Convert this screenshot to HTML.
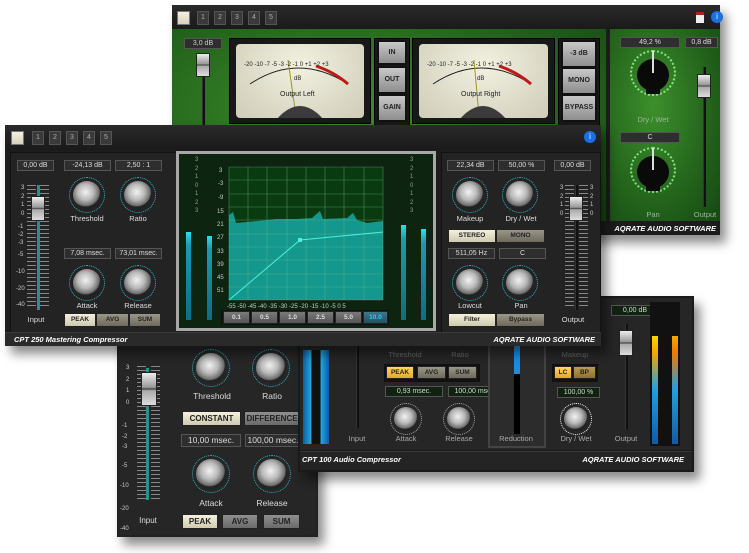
<!DOCTYPE html>
<html><head><meta charset="utf-8">
<style>
*{box-sizing:border-box;margin:0;padding:0}
body{width:749px;height:553px;background:#fff;position:relative;overflow:hidden;font-family:"Liberation Sans",sans-serif;}
.a{position:absolute}
.win{position:absolute;background:#202020;box-shadow:6px 8px 10px rgba(0,0,0,.45)}
.tb{position:absolute;left:0;right:0;top:0;height:24px;background:linear-gradient(#2a2a2a,#1a1a1a)}
.sq{position:absolute;width:13px;height:14px;background:linear-gradient(#f4f1e2,#d7d2bd);border:1px solid #777}
.nb{position:absolute;width:12px;height:14px;background:#3a3a3a;border:1px solid #555;color:#aaa;font-size:7px;text-align:center;line-height:12px}
.box{position:absolute;background:#2e2e2e;border:1px solid #555;color:#ddd;font-size:7px;text-align:center;line-height:9px;height:11px}
.lbl{position:absolute;color:#ddd;font-size:7.5px;text-align:center;width:60px;margin-left:-30px}
.btn{position:absolute;background:linear-gradient(#9a9788,#6d6a5e);border:1px solid #222;color:#222;font-size:6.5px;font-weight:bold;text-align:center;line-height:12px;height:14px}
.on{background:linear-gradient(#f4f0dc,#cfc9b0)}
.yl{background:linear-gradient(#ffd85a,#e2a92a)}
.knob{position:absolute;border-radius:50%;background:radial-gradient(circle at 45% 40%,#f2f2f2 0,#b9b9b9 35%,#6b6b6b 60%,#262626 64%,#111 100%)}
.ring{position:absolute;border-radius:50%;border:1px dotted #2fb9c8}
.ft{position:absolute;color:#fff;font-size:7.5px;font-weight:bold;font-style:italic}
.track{position:absolute;width:3px;background:#111;border-left:1px solid #333}
.thumb{position:absolute;width:14px;background:linear-gradient(#eee,#999 45%,#444 50%,#aaa 55%,#ddd);border:1px solid #222;border-radius:1px}
.sc{position:absolute;font-size:6px;color:#ccc}
.green{background:radial-gradient(ellipse at 40% 40%,#3d8f2c,#1f5c19 70%,#174712)}
.vu{position:absolute;background:#181818;border:1px solid #000}
.vuf{position:absolute;left:6px;top:5px;right:6px;bottom:5px;background:radial-gradient(ellipse at 50% 30%,#f2f0df,#cfcdb9);border-radius:4px;overflow:hidden}
.gbtn{position:absolute;background:linear-gradient(#c8c8c8,#8e8e8e);border:2px solid #111;font-size:7px;font-weight:bold;color:#222;text-align:center}
.ticks{position:absolute;width:9px;background:repeating-linear-gradient(#888 0 1px,transparent 1px 4px)}
</style></head><body>

<!-- GREEN BACK WINDOW -->
<div class="win" style="left:172px;top:5px;width:548px;height:230px;background:#1c1c1c">
 <div class="tb"></div>
 <div class="sq" style="left:5px;top:6px"></div>
 <div class="nb" style="left:25px;top:6px">1</div><div class="nb" style="left:42px;top:6px">2</div><div class="nb" style="left:59px;top:6px">3</div><div class="nb" style="left:76px;top:6px">4</div><div class="nb" style="left:93px;top:6px">5</div>
 <div class="a" style="left:524px;top:7px;width:8px;height:11px;background:#eee;border-top:3px solid #b02020"></div>
 <div class="a" style="left:539px;top:6px;width:12px;height:12px;border-radius:50%;background:#1b6fe0;color:#fff;font-size:8px;text-align:center;line-height:12px">i</div>
 <div class="a green" style="left:0;top:24px;width:434px;height:192px"></div>
 <div class="a green" style="left:438px;top:24px;width:110px;height:192px"></div>
 <div class="box" style="left:12px;top:33px;width:38px;color:#ccc">3,0 dB</div>
 <div class="track" style="left:30px;top:48px;height:160px"></div>
 <div class="thumb" style="left:24px;top:48px;height:24px"></div>
 <div class="vu" style="left:57px;top:33px;width:142px;height:86px"><div class="vuf">
  <svg width="128" height="74" style="position:absolute;left:0;top:0">
   <path d="M14 40 Q62 8 112 40" fill="none" stroke="#222" stroke-width="1"/>
   <path d="M80 22 Q98 28 112 40" fill="none" stroke="#c01818" stroke-width="3"/>
   <line x1="60" y1="72" x2="52" y2="16" stroke="#9a9a20" stroke-width="1"/>
   <path d="M40 76 Q64 48 88 76Z" fill="#3b3b3b"/>
   <text x="8" y="22" font-size="6" fill="#222" font-family="Liberation Sans">-20 -10 -7 -5 -3 -2 -1 0 +1 +2 +3</text>
   <text x="58" y="36" font-size="6" fill="#222" font-family="Liberation Sans">dB</text>
   <text x="44" y="52" font-size="7" fill="#222" font-family="Liberation Sans">Output Left</text>
  </svg></div></div>
 <div class="vu" style="left:202px;top:33px;width:36px;height:88px"></div>
 <div class="gbtn" style="left:205px;top:35px;width:30px;height:25px;line-height:21px">IN</div>
 <div class="gbtn yl" style="left:205px;top:61px;width:30px;height:28px;line-height:24px">OUT</div>
 <div class="gbtn" style="left:205px;top:89px;width:30px;height:28px;line-height:24px">GAIN</div>
 <div class="vu" style="left:240px;top:33px;width:143px;height:86px"><div class="vuf">
  <svg width="130" height="74" style="position:absolute;left:0;top:0">
   <path d="M14 40 Q62 8 112 40" fill="none" stroke="#222" stroke-width="1"/>
   <path d="M80 22 Q98 28 112 40" fill="none" stroke="#c01818" stroke-width="3"/>
   <line x1="60" y1="72" x2="55" y2="16" stroke="#9a9a20" stroke-width="1"/>
   <path d="M40 76 Q64 48 88 76Z" fill="#3b3b3b"/>
   <text x="8" y="22" font-size="6" fill="#222" font-family="Liberation Sans">-20 -10 -7 -5 -3 -2 -1 0 +1 +2 +3</text>
   <text x="58" y="36" font-size="6" fill="#222" font-family="Liberation Sans">dB</text>
   <text x="42" y="52" font-size="7" fill="#222" font-family="Liberation Sans">Output Right</text>
  </svg></div></div>
 <div class="vu" style="left:386px;top:33px;width:42px;height:88px"></div>
 <div class="gbtn" style="left:389px;top:35px;width:36px;height:28px;line-height:24px">-3 dB</div>
 <div class="gbtn" style="left:389px;top:62px;width:36px;height:28px;line-height:24px">MONO</div>
 <div class="gbtn" style="left:389px;top:89px;width:36px;height:28px;line-height:24px">BYPASS</div>
 <div class="box" style="left:448px;top:32px;width:60px">49,2 %</div>
 <div class="box" style="left:513px;top:32px;width:33px">0,8 dB</div>
 <div class="ring" style="left:458px;top:45px;width:46px;height:46px;border:2px dotted #9f9;opacity:.8"></div>
 <div class="a" style="left:465px;top:54px;width:32px;height:32px;border-radius:50%;background:#0a0a0a"></div>
 <div class="a" style="left:474px;top:80px;width:14px;height:9px;background:#0a0a0a"></div>
 <div class="a" style="left:480px;top:46px;width:2px;height:22px;background:#ddd"></div>
 <div class="lbl" style="left:481px;top:110px;color:#9ab69a">Dry / Wet</div>
 <div class="box" style="left:448px;top:127px;width:60px">C</div>
 <div class="ring" style="left:458px;top:142px;width:46px;height:46px;border:2px dotted #9f9;opacity:.8"></div>
 <div class="a" style="left:465px;top:151px;width:32px;height:32px;border-radius:50%;background:#0a0a0a"></div>
 <div class="a" style="left:474px;top:177px;width:14px;height:9px;background:#0a0a0a"></div>
 <div class="a" style="left:480px;top:143px;width:2px;height:22px;background:#ddd"></div>
 <div class="lbl" style="left:481px;top:205px;color:#9ab69a">Pan</div>
 <div class="track" style="left:531px;top:62px;height:140px"></div>
 <div class="thumb" style="left:525px;top:69px;height:24px"></div>
 <div class="lbl" style="left:533px;top:205px;color:#9ab69a">Output</div>
 <div class="ft" style="right:4px;top:219px">AQRATE AUDIO SOFTWARE</div>
</div>

<!-- BOTTOM LEFT WINDOW -->
<div class="win" style="left:117px;top:330px;width:201px;height:207px;background:#222">
 <div class="a" style="left:2px;top:2px;width:197px;height:203px;background:#262626"></div>
 <div class="a" style="left:29px;top:38px;width:3px;height:132px;background:#2a8f90"></div>
 <div class="ticks" style="left:20px;top:36px;height:136px"></div>
 <div class="ticks" style="left:34px;top:36px;height:136px"></div>
 <div class="thumb" style="left:24px;top:42px;width:16px;height:34px"></div>
 <div class="sc" style="left:9px;top:33px;line-height:11.5px">3<br>2<br>1<br>0</div>
 <div class="sc" style="left:5px;top:91px;line-height:10.5px">-1<br>-2<br>-3</div>
 <div class="sc" style="left:5px;top:133px">-5</div><div class="sc" style="left:3px;top:153px">-10</div><div class="sc" style="left:3px;top:176px">-20</div>
 <div class="sc" style="left:3px;top:196px">-40</div>
 <div class="lbl" style="left:31px;top:186px;font-size:8px">Input</div>
 <div class="ring" style="left:75px;top:19px;width:38px;height:38px"></div>
 <div class="knob" style="left:79px;top:23px;width:30px;height:30px"></div>
 <div class="ring" style="left:135px;top:19px;width:38px;height:38px"></div>
 <div class="knob" style="left:139px;top:23px;width:30px;height:30px"></div>
 <div class="lbl" style="left:95px;top:61px;font-size:8.5px">Threshold</div>
 <div class="lbl" style="left:155px;top:61px;font-size:8.5px">Ratio</div>
 <div class="btn on" style="left:65px;top:81px;width:59px;height:15px;font-size:8px;line-height:13px">CONSTANT</div>
 <div class="btn" style="left:127px;top:81px;width:56px;height:15px;font-size:8px;line-height:13px;background:linear-gradient(#8f8f8f,#6a6a6a)">DIFFERENCE</div>
 <div class="box" style="left:64px;top:104px;width:60px;height:13px;font-size:8.5px;line-height:11px">10,00 msec.</div>
 <div class="box" style="left:128px;top:104px;width:56px;height:13px;font-size:8.5px;line-height:11px">100,00 msec.</div>
 <div class="ring" style="left:75px;top:125px;width:38px;height:38px"></div>
 <div class="knob" style="left:79px;top:129px;width:30px;height:30px"></div>
 <div class="ring" style="left:136px;top:125px;width:38px;height:38px"></div>
 <div class="knob" style="left:140px;top:129px;width:30px;height:30px"></div>
 <div class="lbl" style="left:94px;top:168px;font-size:8.5px">Attack</div>
 <div class="lbl" style="left:155px;top:168px;font-size:8.5px">Release</div>
 <div class="btn on" style="left:65px;top:184px;width:36px;height:15px;font-size:8px;line-height:13px">PEAK</div>
 <div class="btn" style="left:105px;top:184px;width:36px;height:15px;font-size:8px;line-height:13px;background:linear-gradient(#8f8f8f,#6a6a6a)">AVG</div>
 <div class="btn" style="left:146px;top:184px;width:37px;height:15px;font-size:8px;line-height:13px;background:linear-gradient(#8f8f8f,#6a6a6a)">SUM</div>
</div>

<!-- CPT 100 WINDOW -->
<div class="win" style="left:298px;top:296px;width:396px;height:176px;background:#1a1a1a">
 <div class="a" style="left:2px;top:2px;width:392px;height:152px;background:#262626"></div>
 <div class="a" style="left:5px;top:54px;width:26px;height:94px;background:linear-gradient(90deg,#0e5ca8,#22a6d8 30%,#111 35%,#111 65%,#22a6d8 70%,#0e5ca8)"></div>
 <div class="track" style="left:58px;top:40px;height:92px"></div>
 <div class="lbl" style="left:59px;top:138px;color:#aaa">Input</div>
 <div class="lbl" style="left:107px;top:54px;color:#666">Threshold</div>
 <div class="lbl" style="left:162px;top:54px;color:#666">Ratio</div>
 <div class="a" style="left:86px;top:68px;width:96px;height:18px;background:#111"></div>
 <div class="btn yl" style="left:88px;top:70px;width:28px;height:13px;line-height:11px">PEAK</div>
 <div class="btn" style="left:119px;top:70px;width:29px;height:13px;line-height:11px">AVG</div>
 <div class="btn" style="left:150px;top:70px;width:29px;height:13px;line-height:11px">SUM</div>
 <div class="box" style="left:87px;top:90px;width:58px;background:#122212;color:#cdc">0,93 msec.</div>
 <div class="box" style="left:150px;top:90px;width:55px;background:#122212;color:#cdc">100,00 msec.</div>
 <div class="ring" style="left:92px;top:107px;width:32px;height:32px;border-color:#aaa"></div>
 <div class="knob" style="left:96px;top:111px;width:24px;height:24px"></div>
 <div class="ring" style="left:145px;top:107px;width:32px;height:32px;border-color:#aaa"></div>
 <div class="knob" style="left:149px;top:111px;width:24px;height:24px"></div>
 <div class="lbl" style="left:108px;top:138px;color:#aaa">Attack</div>
 <div class="lbl" style="left:161px;top:138px;color:#aaa">Release</div>
 <div class="a" style="left:190px;top:20px;width:58px;height:132px;background:#2c2c2c;border:2px solid #444"></div>
 <div class="a" style="left:216px;top:50px;width:6px;height:88px;background:#000"></div>
 <div class="a" style="left:216px;top:50px;width:6px;height:28px;background:#1c8ce0"></div>
 <div class="lbl" style="left:218px;top:138px;color:#aaa">Reduction</div>
 <div class="lbl" style="left:277px;top:54px;color:#666">Makeup</div>
 <div class="a" style="left:254px;top:68px;width:46px;height:18px;background:#111"></div>
 <div class="btn yl" style="left:256px;top:70px;width:18px;height:13px;line-height:11px">LC</div>
 <div class="btn" style="left:275px;top:70px;width:23px;height:13px;line-height:11px;background:linear-gradient(#b89c52,#8c7030)">BP</div>
 <div class="box" style="left:259px;top:91px;width:43px;background:#122212;color:#cdc">100,00 %</div>
 <div class="ring" style="left:262px;top:107px;width:32px;height:32px;border-color:#fff"></div>
 <div class="knob" style="left:266px;top:111px;width:24px;height:24px"></div>
 <div class="lbl" style="left:278px;top:138px;color:#aaa">Dry / Wet</div>
 <div class="box" style="left:313px;top:9px;width:48px;background:#122212;color:#cdc">0,00 dB</div>
 <div class="track" style="left:327px;top:28px;height:106px"></div>
 <div class="thumb" style="left:321px;top:34px;height:26px"></div>
 <div class="lbl" style="left:328px;top:138px;color:#aaa">Output</div>
 <div class="a" style="left:352px;top:6px;width:30px;height:144px;background:#111"></div>
 <div class="a" style="left:354px;top:40px;width:6px;height:108px;background:linear-gradient(#f5d800,#f5a800 15%,#20a0e0 50%,#0e5ca8)"></div>
 <div class="a" style="left:374px;top:40px;width:6px;height:108px;background:linear-gradient(#f5a800,#f57800 15%,#20a0e0 50%,#0e5ca8)"></div>
 <div class="a" style="left:2px;top:155px;width:392px;height:19px;background:#242424;border-top:1px solid #3a3a3a"></div>
 <div class="ft" style="left:4px;top:159px">CPT 100 Audio Compressor</div>
 <div class="ft" style="right:10px;top:159px">AQRATE AUDIO SOFTWARE</div>
</div>

<!-- MAIN CPT 250 WINDOW -->
<div class="win" style="left:5px;top:125px;width:596px;height:221px;background:#1d1d1d">
 <div class="tb" style="height:25px"></div>
 <div class="sq" style="left:6px;top:6px"></div>
 <div class="nb" style="left:27px;top:6px">1</div><div class="nb" style="left:44px;top:6px">2</div><div class="nb" style="left:61px;top:6px">3</div><div class="nb" style="left:78px;top:6px">4</div><div class="nb" style="left:95px;top:6px">5</div>
 <div class="a" style="left:579px;top:6px;width:12px;height:12px;border-radius:50%;background:#1b6fe0;color:#fff;font-size:8px;text-align:center;line-height:12px">i</div>
 <div class="a" style="left:5px;top:27px;width:168px;height:182px;background:#232323;border:1px solid #111"></div>
 <div class="box" style="left:12px;top:35px;width:37px">0,00 dB</div>
 <div class="box" style="left:59px;top:35px;width:47px">-24,13 dB</div>
 <div class="box" style="left:110px;top:35px;width:47px">2,50 : 1</div>
 <div class="ticks" style="left:22px;top:60px;height:122px"></div><div class="ticks" style="left:35px;top:60px;height:122px"></div>
 <div class="a" style="left:32px;top:60px;width:3px;height:125px;background:#2a8f90"></div>
 <div class="thumb" style="left:26px;top:71px;width:14px;height:25px"></div>
 <div class="sc" style="left:16px;top:59px;line-height:8.5px">3<br>2<br>1<br>0</div>
 <div class="sc" style="left:13px;top:98px;line-height:8px">-1<br>-2<br>-3</div>
 <div class="sc" style="left:13px;top:127px">-5</div><div class="sc" style="left:11px;top:144px">-10</div><div class="sc" style="left:11px;top:161px">-20</div><div class="sc" style="left:11px;top:177px">-40</div>
 <div class="lbl" style="left:31px;top:190px">Input</div>
 <div class="ring" style="left:64px;top:52px;width:36px;height:36px"></div>
 <div class="knob" style="left:68px;top:56px;width:28px;height:28px"></div>
 <div class="ring" style="left:115px;top:52px;width:36px;height:36px"></div>
 <div class="knob" style="left:119px;top:56px;width:28px;height:28px"></div>
 <div class="lbl" style="left:82px;top:89px">Threshold</div>
 <div class="lbl" style="left:133px;top:89px">Ratio</div>
 <div class="box" style="left:59px;top:123px;width:47px">7,08 msec.</div>
 <div class="box" style="left:110px;top:123px;width:47px">73,01 msec.</div>
 <div class="ring" style="left:64px;top:140px;width:36px;height:36px"></div>
 <div class="knob" style="left:68px;top:144px;width:28px;height:28px"></div>
 <div class="ring" style="left:115px;top:140px;width:36px;height:36px"></div>
 <div class="knob" style="left:119px;top:144px;width:28px;height:28px"></div>
 <div class="lbl" style="left:82px;top:176px">Attack</div>
 <div class="lbl" style="left:133px;top:176px">Release</div>
 <div class="btn on" style="left:59px;top:188px;width:32px">PEAK</div>
 <div class="btn" style="left:91px;top:188px;width:33px">AVG</div>
 <div class="btn" style="left:124px;top:188px;width:32px">SUM</div>
 <div class="a" style="left:171px;top:26px;width:260px;height:180px;background:#a8a8a8;padding:3px"><div style="width:100%;height:100%;background:#0c2410"></div></div>
 <div class="a" style="left:181px;top:107px;width:5px;height:88px;background:linear-gradient(#2ee0f0,#1a9bb0 15%,#0e6e80)"></div>
 <div class="a" style="left:202px;top:111px;width:5px;height:84px;background:linear-gradient(#2ee0f0,#1a9bb0 15%,#0e6e80)"></div>
 <div class="a" style="left:396px;top:100px;width:5px;height:95px;background:linear-gradient(#2ee0f0,#1a9bb0 15%,#0e6e80)"></div>
 <div class="a" style="left:416px;top:104px;width:5px;height:91px;background:linear-gradient(#2ee0f0,#1a9bb0 15%,#0e6e80)"></div>
 <div class="sc" style="left:190px;top:31px;line-height:8.5px;color:#999">3<br>2<br>1<br>0<br>1<br>2<br>3</div>
 <div class="sc" style="left:405px;top:31px;line-height:8.5px;color:#999">3<br>2<br>1<br>0<br>1<br>2<br>3</div>
 <svg class="a" style="left:212px;top:38px" width="180" height="148">
  <rect x="12" y="4" width="154" height="133" fill="#0a3a10"/>
  <polygon points="12,52 16,49 19,60 40,58 60,56 80,56 95,55 103,48 106,56 130,55 136,50 140,57 150,60 166,58 166,137 12,137" fill="#14978c"/>
  <g stroke="#6fbf8f" stroke-width=".6" opacity=".6">
   <path d="M12 4V137M31 4V137M50 4V137M70 4V137M89 4V137M108 4V137M127 4V137M147 4V137M166 4V137"/>
   <path d="M12 4H166M12 17H166M12 31H166M12 44H166M12 57H166M12 71H166M12 84H166M12 97H166M12 111H166M12 124H166M12 137H166"/>
  </g>
  <polyline points="12,137 83,77 166,69" fill="none" stroke="#4ff0e0" stroke-width="1"/>
  <rect x="81" y="75" width="4" height="4" fill="#4ff0e0"/>
  <g font-size="6" fill="#ccc" font-family="Liberation Sans">
   <text x="2" y="9">3</text><text x="1" y="22">-3</text><text x="1" y="36">-9</text><text x="0" y="50">15</text><text x="0" y="63">21</text><text x="0" y="76">27</text><text x="0" y="90">33</text><text x="0" y="103">39</text><text x="0" y="116">45</text><text x="0" y="129">51</text>
   <text x="10" y="145">-55 -50 -45 -40 -35 -30 -25 -20 -15 -10 -5  0  5</text>
  </g>
 </svg>
 <div class="a" style="left:216px;top:185px;width:168px;height:15px;background:#111"></div>
 <div class="btn" style="left:218px;top:186px;width:27px;height:13px;line-height:11px;background:linear-gradient(#7a7a7a,#555);color:#ddd">0.1</div>
 <div class="btn" style="left:246px;top:186px;width:27px;height:13px;line-height:11px;background:linear-gradient(#7a7a7a,#555);color:#ddd">0.5</div>
 <div class="btn" style="left:274px;top:186px;width:27px;height:13px;line-height:11px;background:linear-gradient(#7a7a7a,#555);color:#ddd">1.0</div>
 <div class="btn" style="left:302px;top:186px;width:27px;height:13px;line-height:11px;background:linear-gradient(#7a7a7a,#555);color:#ddd">2.5</div>
 <div class="btn" style="left:330px;top:186px;width:27px;height:13px;line-height:11px;background:linear-gradient(#7a7a7a,#555);color:#ddd">5.0</div>
 <div class="btn" style="left:358px;top:186px;width:25px;height:13px;line-height:11px;background:linear-gradient(#3a7a8a,#205060);color:#3cf">10.0</div>
 <div class="a" style="left:436px;top:27px;width:160px;height:182px;background:#232323;border:1px solid #111"></div>
 <div class="box" style="left:442px;top:35px;width:47px">22,34 dB</div>
 <div class="box" style="left:493px;top:35px;width:47px">50,00 %</div>
 <div class="box" style="left:549px;top:35px;width:37px">0,00 dB</div>
 <div class="ring" style="left:447px;top:52px;width:36px;height:36px"></div>
 <div class="knob" style="left:451px;top:56px;width:28px;height:28px"></div>
 <div class="ring" style="left:497px;top:52px;width:36px;height:36px"></div>
 <div class="knob" style="left:501px;top:56px;width:28px;height:28px"></div>
 <div class="lbl" style="left:465px;top:89px">Makeup</div>
 <div class="lbl" style="left:516px;top:89px">Dry / Wet</div>
 <div class="btn on" style="left:443px;top:104px;width:48px">STEREO</div>
 <div class="btn" style="left:491px;top:104px;width:49px">MONO</div>
 <div class="box" style="left:443px;top:123px;width:47px">511,05 Hz</div>
 <div class="box" style="left:494px;top:123px;width:47px">C</div>
 <div class="ring" style="left:447px;top:140px;width:36px;height:36px"></div>
 <div class="knob" style="left:451px;top:144px;width:28px;height:28px"></div>
 <div class="ring" style="left:497px;top:140px;width:36px;height:36px"></div>
 <div class="knob" style="left:501px;top:144px;width:28px;height:28px"></div>
 <div class="lbl" style="left:465px;top:176px">Lowcut</div>
 <div class="lbl" style="left:516px;top:176px">Pan</div>
 <div class="btn on" style="left:443px;top:188px;width:48px">Filter</div>
 <div class="btn" style="left:491px;top:188px;width:49px">Bypass</div>
 <div class="ticks" style="left:560px;top:60px;height:122px"></div><div class="ticks" style="left:574px;top:60px;height:122px"></div>
 <div class="track" style="left:570px;top:60px;height:125px"></div>
 <div class="thumb" style="left:564px;top:71px;width:14px;height:25px"></div>
 <div class="sc" style="left:555px;top:59px;line-height:8.5px">3<br>2<br>1<br>0</div>
 <div class="sc" style="left:585px;top:59px;line-height:8.5px">3<br>2<br>1<br>0</div>
 <div class="lbl" style="left:568px;top:190px">Output</div>
 <div class="a" style="left:0;top:207px;width:596px;height:14px;background:#2a2a2a;border-top:1px solid #3a3a3a"></div>
 <div class="ft" style="left:9px;top:210px">CPT 250 Mastering Compressor</div>
 <div class="ft" style="right:6px;top:210px">AQRATE AUDIO SOFTWARE</div>
</div>
</body></html>
